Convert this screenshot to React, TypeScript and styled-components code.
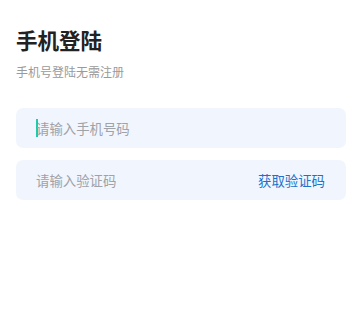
import styled, { createGlobalStyle } from 'styled-components';

const GlobalStyle = createGlobalStyle`
  body {
    margin: 0;
    background: #ffffff;
    font-family: 'Noto Sans CJK SC', 'Noto Sans', sans-serif;
  }
`;

function App() {
  return (
    <>
      <GlobalStyle />
      <Page>
        <Title>手机登陆</Title>
        <SubTitle>手机号登陆无需注册</SubTitle>
        <Form>
          <Field>
            <Caret />
            <Placeholder>请输入手机号码</Placeholder>
          </Field>
          <Field>
            <Placeholder>请输入验证码</Placeholder>
            <CodeButton>获取验证码</CodeButton>
          </Field>
        </Form>
      </Page>
    </>
  );
}

const Page = styled.div`
  display: flex;
  flex-direction: column;
  padding: 26px 17px 0 16px;
`;

const Title = styled.h1`
  margin: 0;
  font-size: 21.5px;
  line-height: 28px;
  font-weight: 700;
  color: #222222;
`;

const SubTitle = styled.p`
  margin: 10px 0 0;
  font-size: 12px;
  line-height: 16px;
  color: #9a9a9a;
`;

const Form = styled.div`
  display: flex;
  flex-direction: column;
  gap: 12px;
  margin-top: 28px;
`;

const Field = styled.div`
  display: flex;
  align-items: center;
  height: 40px;
  padding: 0 21px 0 20px;
  background: #f1f6fe;
  border-radius: 7px;
`;

const Caret = styled.span`
  width: 2px;
  height: 18px;
  margin-right: -2px;
  background: #22c9aa;
`;

const Placeholder = styled.span`
  flex: 1;
  font-size: 13.4px;
  color: #9fa2a7;
`;

const CodeButton = styled.span`
  font-size: 13.4px;
  color: #1a72cc;
`;

export default App;
